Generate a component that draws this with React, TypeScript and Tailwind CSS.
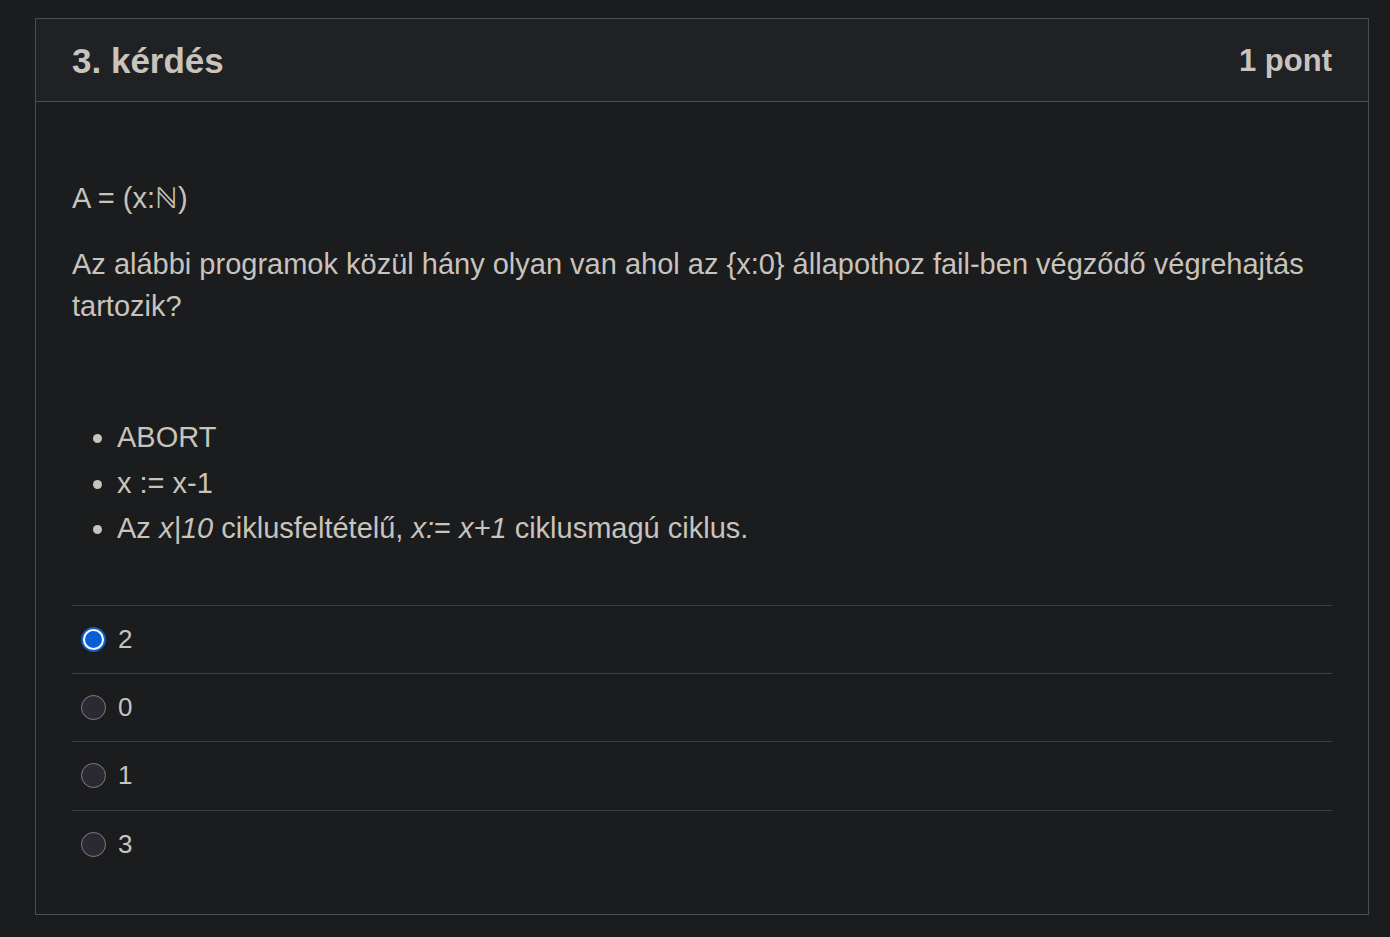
const options = [
  { value: "2", checked: true },
  { value: "0", checked: false },
  { value: "1", checked: false },
  { value: "3", checked: false },
];

function Radio({ checked }: { checked: boolean }) {
  if (checked) {
    return (
      <span className="w-[25px] h-[25px] rounded-full border-2 border-[#0a5fd8] bg-[#0a5fd8] flex items-center justify-center">
        <span className="w-[21px] h-[21px] rounded-full border-[2.5px] border-white bg-[#0a5fd8]" />
      </span>
    );
  }
  return <span className="w-[25px] h-[25px] rounded-full border-[1.5px] border-[#7d7d85] bg-[#2b2a33]" />;
}

export default function App() {
  return (
    <div className="min-h-screen bg-[#1b1c1e] pt-[18px] font-['Liberation_Sans',Arial,sans-serif] text-[#c8c3bc]">
      <div className="ml-[35px] w-[1334px] border border-[#4b4e52] bg-[#1b1c1e]">
        {/* Header */}
        <div className="h-[83px] flex items-center justify-between px-[36px] bg-[#202124] border-b border-[#4b4e52]">
          <h3 className="text-[35px] font-bold leading-none">3. kérdés</h3>
          <span className="text-[31px] font-bold leading-none">1 pont</span>
        </div>

        {/* Body */}
        <div className="px-[36px] pt-[75px] pb-[36px]">
          <p className="text-[29px] leading-[42px]">A = (x:ℕ)</p>
          <p className="text-[29px] leading-[42px] mt-[24px]">
            Az alábbi programok közül hány olyan van ahol az {"{x:0}"} állapothoz fail-ben végződő végrehajtás tartozik?
          </p>

          <ul className="list-disc pl-[45px] mt-[88px] text-[29px] leading-[45.5px]">
            <li>ABORT</li>
            <li>x := x-1</li>
            <li>
              Az <i>x|10</i> ciklusfeltételű, <i>x:</i>= <i>x+1</i> ciklusmagú ciklus.
            </li>
          </ul>

          <div className="mt-[53px]">
            {options.map((o, i) => (
              <label
                key={o.value}
                className={`${i === 2 ? "h-[69px]" : "h-[68px]"} flex items-center gap-[12px] pl-[9px] border-t border-[#3b3e42]`}
              >
                <Radio checked={o.checked} />
                <span className="text-[26px] leading-none -mt-[1px]">{o.value}</span>
              </label>
            ))}
          </div>
        </div>
      </div>
    </div>
  );
}
